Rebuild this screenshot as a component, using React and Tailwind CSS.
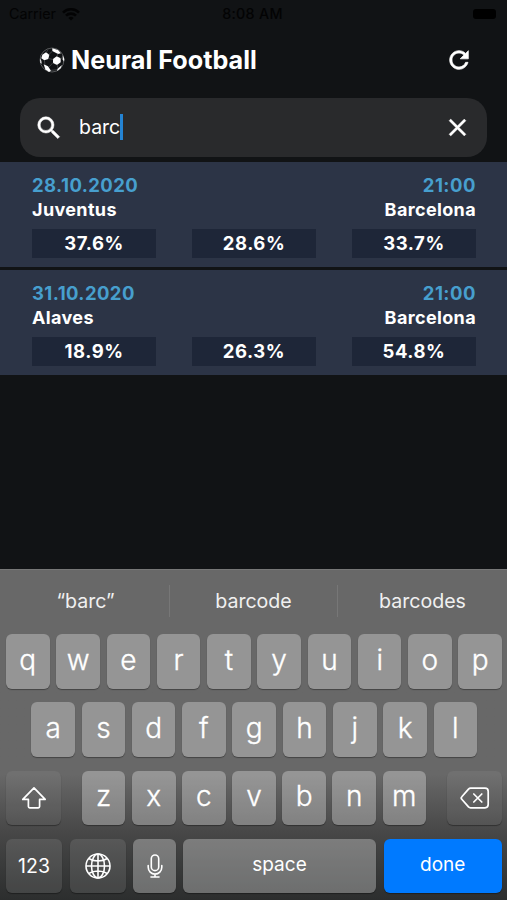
const matches = [
	{ date: '28.10.2020', time: '21:00', home: 'Juventus', away: 'Barcelona', odds: ['37.6%', '28.6%', '33.7%'] },
	{ date: '31.10.2020', time: '21:00', home: 'Alaves', away: 'Barcelona', odds: ['18.9%', '26.3%', '54.8%'] },
];

const WifiIcon = () => (
	<svg width="18" height="13" viewBox="0 0 18 13" fill="none" stroke="#000" strokeWidth="2.6">
		<path d="M1 4.6a11.3 11.3 0 0 1 16 0M4 7.7a7 7 0 0 1 10 0" />
		<path d="M9 12.6 6.4 10a3.7 3.7 0 0 1 5.2 0z" fill="#000" stroke="none" />
	</svg>
);

const BallIcon = () => (
	<svg width="26" height="26" viewBox="0 0 78 78" fill="#fff">
		<circle cx="39" cy="39" r="36" fill="none" stroke="#77787a" strokeWidth="2" />
		<path d="M40 4 57 9 66 19 57 21 40 12z" />
		<path d="M10 23 21 16 31 23 28 36 16 40 7 34z" />
		<path d="M42 36 53 28 65 34 65 46 54 54 42 48z" />
		<path d="M14 52 27 58 36 71 30 75 19 67z" />
		<path d="M55 66 69 54 65 64 55 72z" />
		<path d="M3 34 7 41 8 51 4 46z" />
		<path d="M71 24 76 36 75 44 71 37z" />
		<path d="M29 23 40 13M27 34 43 38M56 20 54 29M63 34 71 33M42 47 30 60M54 52 57 64M16 39 18 54M22 17 27 7M35 70 55 68" stroke="#5c5e60" strokeWidth="1.8" fill="none" />
	</svg>
);

const RefreshIcon = () => (
	<svg width="28" height="28" viewBox="0 0 24 24" fill="#fff" stroke="#fff" strokeWidth="0.6" className="ml-auto">
		<path d="M17.65 6.35C16.2 4.9 14.21 4 12 4c-4.42 0-7.99 3.58-7.99 8s3.57 8 7.99 8c3.73 0 6.84-2.55 7.73-6h-2.08c-.82 2.33-3.04 4-5.65 4-3.31 0-6-2.69-6-6s2.69-6 6-6c1.66 0 3.14.69 4.22 1.78L13 11h7V4l-2.35 2.35z" />
	</svg>
);

const SearchIcon = () => (
	<svg width="30" height="30" viewBox="0 0 24 24" fill="#fff" stroke="#fff" strokeWidth="0.4">
		<path d="M15.5 14h-.79l-.28-.27A6.47 6.47 0 0 0 16 9.5 6.5 6.5 0 1 0 9.5 16c1.61 0 3.09-.59 4.23-1.57l.27.28v.79l5 4.99L20.49 19l-4.99-5zm-6 0C7.01 14 5 11.99 5 9.5S7.01 5 9.5 5 14 7.01 14 9.5 11.99 14 9.5 14z" />
	</svg>
);

const CloseIcon = () => (
	<svg width="29" height="29" viewBox="0 0 24 24" fill="#fff" stroke="#fff" strokeWidth="0.3" className="ml-auto">
		<path d="M19 6.41 17.59 5 12 10.59 6.41 5 5 6.41 10.59 12 5 17.59 6.41 19 12 13.41 17.59 19 19 17.59 13.41 12z" />
	</svg>
);

const ShiftIcon = () => (
	<svg width="26" height="24" viewBox="0 0 26 24" fill="none" stroke="#fff" strokeWidth="1.7" strokeLinejoin="round">
		<path d="M13 1.8 24.2 13.4H18.6V20.5a1.3 1.3 0 0 1-1.3 1.3H8.7a1.3 1.3 0 0 1-1.3-1.3V13.4H1.8z" />
	</svg>
);

const DeleteIcon = () => (
	<svg width="30" height="22" viewBox="0 0 30 22" fill="none" stroke="#fff" strokeWidth="1.7" strokeLinejoin="round" strokeLinecap="round">
		<path d="M10.6 1.2H25a3.2 3.2 0 0 1 3.2 3.2v13.2a3.2 3.2 0 0 1-3.2 3.2H10.6a3 3 0 0 1-2.1-.9L1.8 12.2a1.7 1.7 0 0 1 0-2.4L8.5 2.1a3 3 0 0 1 2.1-.9z" />
		<path d="m13.8 7 8 8M21.8 7l-8 8" />
	</svg>
);

const GlobeIcon = () => (
	<svg width="26" height="26" viewBox="0 0 26 26" fill="none" stroke="#fff" strokeWidth="1.6">
		<circle cx="13" cy="13" r="12" />
		<ellipse cx="13" cy="13" rx="6.5" ry="12" />
		<path d="M13 1v24M1 13h24M3.7 5.5c5.2 3.3 13.4 3.3 18.6 0M3.7 20.5c5.2-3.3 13.4-3.3 18.6 0" />
	</svg>
);

const MicIcon = () => (
	<svg width="16" height="24" viewBox="0 0 16 24" fill="none" stroke="#fff" strokeWidth="1.6" strokeLinecap="round">
		<rect x="4.3" y="1" width="7.4" height="15.6" rx="3.7" />
		<path d="M1.2 11.5v1.8a6.8 6.8 0 0 0 13.6 0v-1.8M8 20.2V23M4 23h8" />
	</svg>
);

const MatchCard = ({ match }) => (
	<div className="h-[105px] bg-[#2c3446] px-[31px] pl-8 pt-3 font-bold text-white">
		<div className="flex justify-between text-[18.5px] leading-[22px] text-[#479fce]">
			<span className="tracking-[0.4px]">{match.date}</span>
			<span className="tracking-[0.5px]">{match.time}</span>
		</div>
		<div className="mt-[2px] flex justify-between text-[18px] leading-[23px] tracking-[0.36px]">
			<span>{match.home}</span>
			<span>{match.away}</span>
		</div>
		<div className="mt-2 flex justify-between">
			{match.odds.map((odd, i) => (
				<div key={i} className="h-[29px] w-[124px] bg-[#1e2638] text-center text-[18.5px] leading-[29px] tracking-[0.55px]">
					{odd}
				</div>
			))}
		</div>
	</div>
);

const Key = ({ children, className = '' }) => (
	<div className={`flex h-[54.5px] items-center justify-center rounded-[6px] shadow-[0_1px_1px_rgba(0,0,0,0.35)] ${className}`}>
		{children}
	</div>
);

const Letters = ({ letters }) => letters.split('').map((letter) => (
	<Key key={letter} className="min-w-0 flex-1 bg-white/30 pb-[3px] text-[28px] font-light [-webkit-text-stroke:0.35px_white]">{letter}</Key>
));

const Keyboard = () => (
	<div className="flex h-[331px] flex-col border-t border-[#777] bg-linear-to-b from-[#686868] from-62% via-[#484848] via-79% to-[#2c2e2e] text-white">
		<div className="mt-[15px] flex h-8 text-[19.6px] leading-[32px] text-[#f0f0f0]">
			<div className="w-[169px] pl-[2px] text-center">“barc”</div>
			<div className="w-[169px] border-x border-[#777] text-center">barcode</div>
			<div className="w-[169px] text-center">barcodes</div>
		</div>
		<div className="mt-[17px] flex gap-[6.7px] pl-[6px] pr-[5px]">
			<Letters letters="qwertyuiop" />
		</div>
		<div className="mt-[13.8px] flex gap-[6.7px] pl-[31.3px] pr-[29.8px]">
			<Letters letters="asdfghjkl" />
		</div>
		<div className="mt-[13.8px] flex pl-[6px] pr-[5px]">
			<Key className="w-[55px] bg-white/5"><ShiftIcon /></Key>
			<div className="mx-[21px] flex flex-1 gap-[6.7px]">
				<Letters letters="zxcvbnm" />
			</div>
			<Key className="w-[55px] bg-white/5"><DeleteIcon /></Key>
		</div>
		<div className="mt-[13.8px] flex pl-[6px] pr-[5px] text-[19px]">
			<Key className="w-[56px] bg-white/10 text-[19.5px]">123</Key>
			<Key className="ml-2 w-[56px] bg-white/10"><GlobeIcon /></Key>
			<Key className="ml-[7px] w-[43px] bg-white/30"><MicIcon /></Key>
			<Key className="ml-[7px] w-[193px] bg-white/30 pb-[2px]">space</Key>
			<Key className="ml-[7.5px] flex-1 bg-[#007aff] pb-[2px]">done</Key>
		</div>
	</div>
);

const App = () => {
	return (
		<div className="flex h-[900px] w-[507px] flex-col overflow-hidden bg-[#111315] font-['Inter',sans-serif]">
			<div className="grid h-7 grid-cols-3 items-center pl-[9px] pr-[11px] text-[14.3px] text-black">
				<div className="flex items-center gap-[6px] opacity-80">Carrier <WifiIcon /></div>
				<div className="text-center font-medium tracking-[0.3px] opacity-80">8:08 AM</div>
				<div className="ml-auto h-[10px] w-[23px] rounded-[3px] bg-black" />
			</div>
			<div className="flex h-16 items-center pl-[39px] pr-[34px] text-white">
				<BallIcon />
				<h1 className="ml-[6px] pt-[2px] text-[25.2px] font-bold">Neural Football</h1>
				<RefreshIcon />
			</div>
			<div className="mx-5 mt-[6px] flex h-[59px] items-center rounded-[20px] bg-[#292a2c] pl-[14px] pr-[15px] text-white">
				<SearchIcon />
				<span className="ml-[15px] text-[19.5px]">barc</span>
				<span className="mb-[2px] h-[26px] w-[2.5px] bg-[#2484d4]" />
				<CloseIcon />
			</div>
			<div className="mt-[5px] flex flex-1 flex-col gap-[2.5px]">
				{matches.map((match) => <MatchCard key={match.date} match={match} />)}
			</div>
			<Keyboard />
		</div>
	);
};

export default App;
